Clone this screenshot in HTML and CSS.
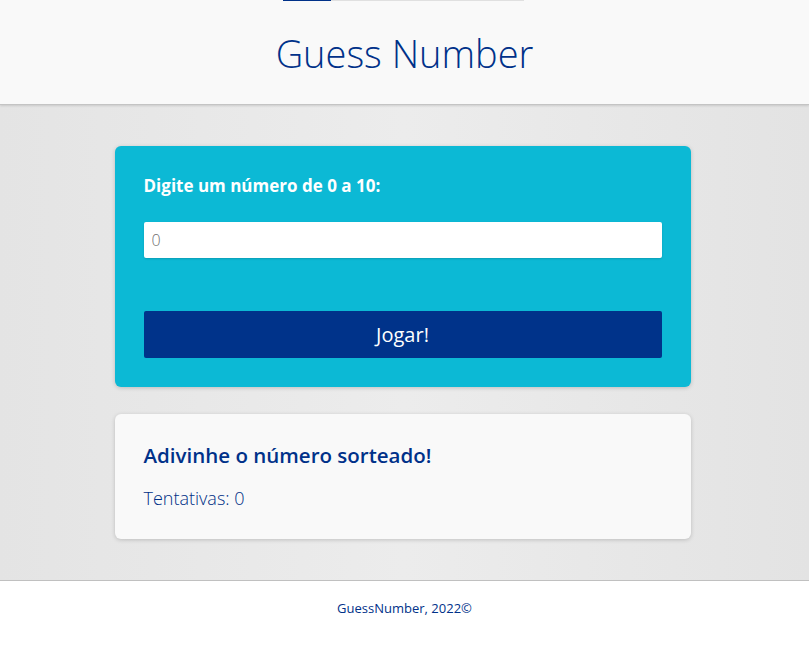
FILE: index.html
```html
<!DOCTYPE html>
<html lang="pt-BR">
<head>
<meta charset="utf-8">
<title>Guess Number</title>
<link rel="stylesheet" href="styles.css">
</head>
<body>
<header class="site-header">
  <div class="progress"><div class="progress-fill"></div></div>
  <h1 class="title">Guess Number</h1>
</header>
<main class="main">
  <div class="container">
    <form class="card card-form" onsubmit="return false">
      <label class="label" for="guess">Digite um número de 0 a 10:</label>
      <input class="input" id="guess" type="number" placeholder="0">
      <button class="btn" type="submit">Jogar!</button>
    </form>
    <section class="card card-result">
      <h2 class="result-title">Adivinhe o número sorteado!</h2>
      <p class="attempts">Tentativas: 0</p>
    </section>
  </div>
</main>
<footer class="site-footer">
  <p class="footer-text">GuessNumber, 2022©</p>
</footer>
</body>
</html>
```
FILE: styles.css
```css
* { box-sizing: border-box; }
html, body { margin: 0; padding: 0; }
body {
  font-family: "Open Sans", "Noto Sans", sans-serif;
  color: #003189;
  background: #ffffff;
}
.site-header {
  height: 105px;
  background: #f9f9f9;
  border-bottom: 1px solid #c4c4c4;
  box-shadow: 0 1px 2px rgba(0,0,0,0.12);
  display: flex;
  flex-direction: column;
  align-items: center;
  position: relative;
  z-index: 1;
}
.progress {
  width: 241px;
  height: 1px;
  background: #e0e0e0;
  margin-left: -3px;
}
.progress-fill {
  width: 48px;
  height: 100%;
  background: #003189;
}
.title {
  margin: 28px 0 0;
  font-size: 38px;
  font-weight: 300;
  line-height: 48px;
  color: #003189;
  letter-spacing: 0;
}
.main {
  height: 476px;
  background: linear-gradient(90deg, #e4e4e4 0%, #ececec 50%, #e3e3e3 100%);
  border-bottom: 1px solid #c0c0c0;
  padding-top: 41px;
}
.container {
  width: 576px;
  margin: 0 auto;
  display: flex;
  flex-direction: column;
  gap: 27px;
  position: relative;
  left: -2px;
}
.card {
  border-radius: 6px;
  box-shadow: 0 1px 4px rgba(0,0,0,0.18);
  padding: 29px;
}
.card-form {
  background: #0cb9d5;
  display: flex;
  flex-direction: column;
  height: 241px;
}
.label {
  font-size: 17px;
  font-weight: 700;
  line-height: 22px;
  color: #ffffff;
  margin-bottom: 25px;
}
.input {
  height: 36px;
  border: none;
  border-radius: 2px;
  padding: 0 8px;
  font-family: inherit;
  font-size: 16px;
  font-weight: 300;
  color: #555;
  background: #fff;
  box-shadow: 0 1px 2px rgba(0,0,0,0.15);
  outline: none;
}
.input::placeholder { color: #6f6f6f; }
.btn {
  margin-top: 53px;
  height: 47px;
  border: none;
  border-radius: 2px;
  background: #00338a;
  color: #ffffff;
  font-family: inherit;
  font-size: 20px;
  font-weight: 400;
  cursor: pointer;
}
.card-result {
  background: #f9f9f9;
  height: 125px;
  padding-top: 27px;
}
.result-title {
  margin: 0;
  font-size: 20.5px;
  font-weight: 600;
  line-height: 28px;
  color: #003189;
}
.attempts {
  margin: 17px 0 0;
  font-size: 18px;
  font-weight: 300;
  line-height: 24px;
  color: #002f86;
}
.site-footer {
  display: flex;
  justify-content: center;
  padding-top: 18px;
}
.footer-text {
  margin: 0;
  font-size: 13px;
  line-height: 18px;
  color: #003189;
}
```
